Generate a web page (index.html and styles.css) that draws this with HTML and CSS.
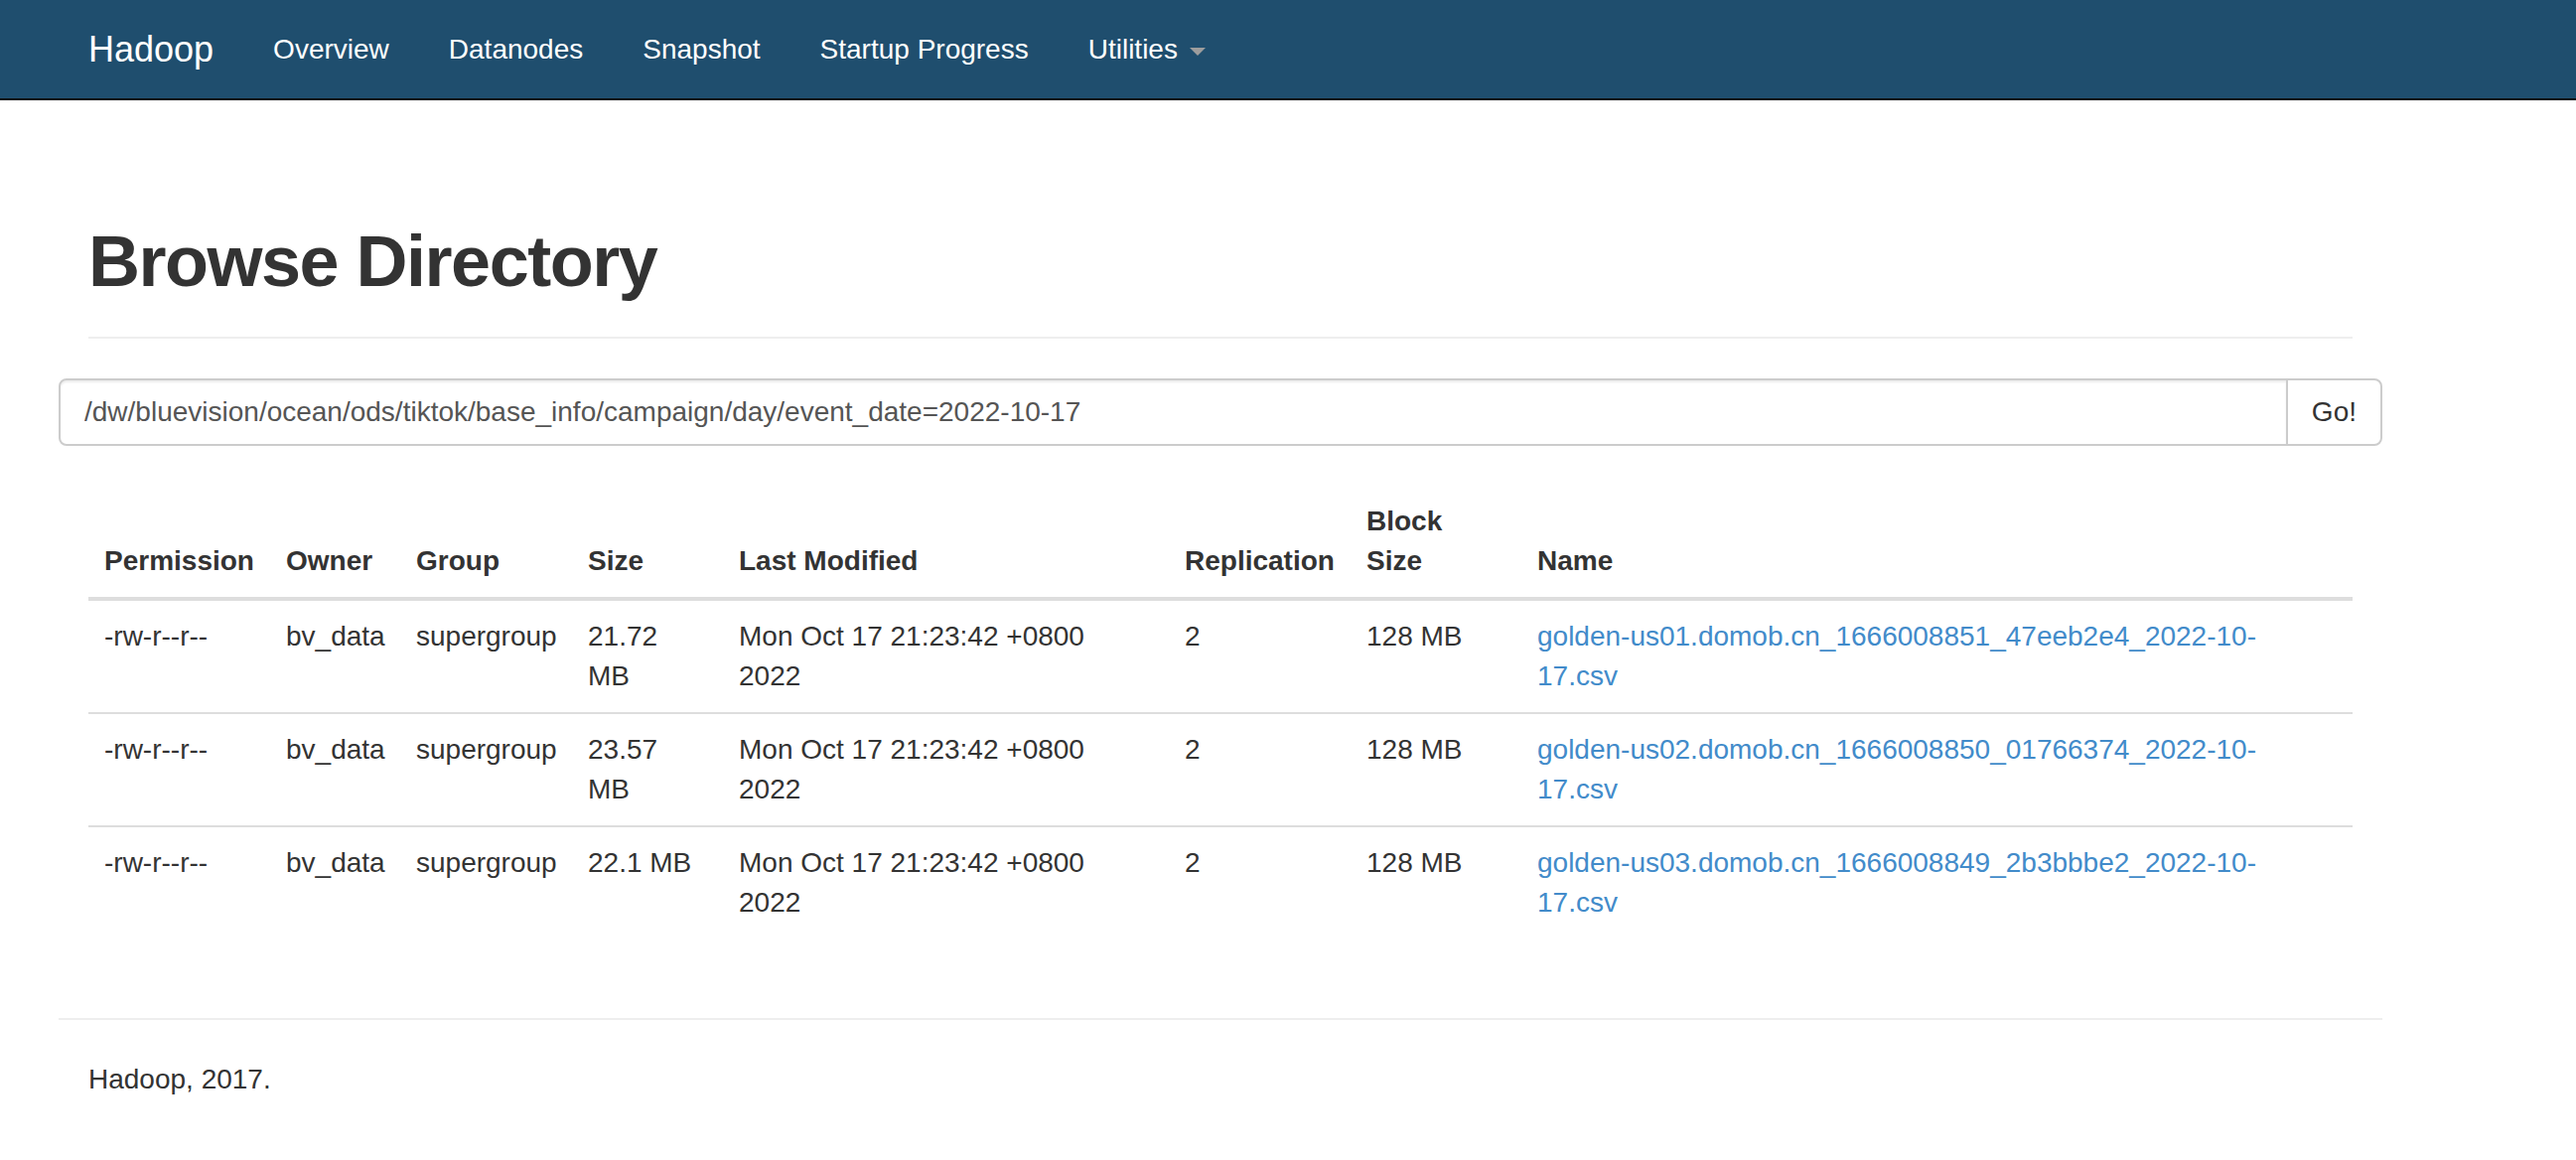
FILE: index.html
```html
<!DOCTYPE html>
<html>
<head>
<meta charset="utf-8">
<title>Browsing HDFS</title>
<link rel="stylesheet" href="styles.css">
</head>
<body>
<header class="navbar">
  <div class="nav-container">
    <a class="brand" href="#">Hadoop</a>
    <ul class="nav">
      <li><a href="#">Overview</a></li>
      <li><a href="#">Datanodes</a></li>
      <li><a href="#">Snapshot</a></li>
      <li><a href="#">Startup Progress</a></li>
      <li><a href="#">Utilities <b class="caret"></b></a></li>
    </ul>
  </div>
</header>

<div class="container">
  <div class="page-header"><h1>Browse Directory</h1></div>

  <div class="row">
    <form class="input-group">
      <input type="text" class="form-control" value="/dw/bluevision/ocean/ods/tiktok/base_info/campaign/day/event_date=2022-10-17">
      <button class="btn" type="button">Go!</button>
    </form>
  </div>

  <div class="panel">
    <table class="table">
      <colgroup>
        <col class="c-perm"><col class="c-owner"><col class="c-group"><col class="c-size"><col class="c-date"><col class="c-repl"><col class="c-block"><col class="c-name">
      </colgroup>
      <thead>
        <tr>
          <th>Permission</th><th>Owner</th><th>Group</th><th>Size</th><th>Last Modified</th><th>Replication</th><th>Block Size</th><th>Name</th>
        </tr>
      </thead>
      <tbody>
        <tr>
          <td>-rw-r--r--</td><td>bv_data</td><td>supergroup</td><td>21.72 MB</td><td>Mon Oct 17 21:23:42 +0800 2022</td><td>2</td><td>128 MB</td><td><a href="#">golden-us01.domob.cn_1666008851_47eeb2e4_2022-10-17.csv</a></td>
        </tr>
        <tr>
          <td>-rw-r--r--</td><td>bv_data</td><td>supergroup</td><td>23.57 MB</td><td>Mon Oct 17 21:23:42 +0800 2022</td><td>2</td><td>128 MB</td><td><a href="#">golden-us02.domob.cn_1666008850_01766374_2022-10-17.csv</a></td>
        </tr>
        <tr>
          <td>-rw-r--r--</td><td>bv_data</td><td>supergroup</td><td>22.1 MB</td><td>Mon Oct 17 21:23:42 +0800 2022</td><td>2</td><td>128 MB</td><td><a href="#">golden-us03.domob.cn_1666008849_2b3bbbe2_2022-10-17.csv</a></td>
        </tr>
      </tbody>
    </table>
  </div>

  <div class="row footer">
    <hr>
    <p class="copy">Hadoop, 2017.</p>
  </div>
</div>
</body>
</html>
```

FILE: styles.css
```css
* { box-sizing: border-box; }

html, body {
  margin: 0;
  padding: 0;
  background: #fff;
}

body {
  font-family: "Liberation Sans", Arial, Helvetica, sans-serif;
  font-size: 28px;
  line-height: 40px;
  color: #333;
}

a { color: #428bca; text-decoration: none; }

/* Navbar */
.navbar {
  background: #1f4e6e;
  border-bottom: 2px solid #080808;
  height: 101px;
}

.nav-container {
  margin-left: 59px;
  width: 2340px;
  padding: 0 30px;
  display: flex;
  align-items: flex-start;
}

.brand {
  margin-left: -30px;
  padding: 30px;
  font-size: 36px;
  line-height: 40px;
  color: #fff;
}

.nav {
  list-style: none;
  margin: 0;
  padding: 0;
  display: flex;
}

.nav a {
  display: block;
  padding: 30px;
  font-size: 28px;
  line-height: 40px;
  color: #fff;
}

.caret {
  display: inline-block;
  width: 0;
  height: 0;
  margin-left: 4px;
  vertical-align: middle;
  border-top: 8px solid #9d9d9d;
  border-left: 8px solid transparent;
  border-right: 8px solid transparent;
}

/* Main container */
.container {
  margin-left: 59px;
  width: 2340px;
  padding: 0 30px;
}

.row {
  margin: 0 -30px;
}

.page-header {
  margin: 123px 0 40px;
  padding-bottom: 17px;
  border-bottom: 2px solid #eee;
}

.page-header h1 {
  margin: 0 0 20px;
  font-size: 72px;
  line-height: 78px;
  font-weight: bold;
  letter-spacing: -1.5px;
  color: #333;
}

/* Input group */
.input-group {
  display: flex;
  margin: 0;
}

.form-control {
  flex: 1;
  height: 68px;
  padding: 12px 24px;
  font-family: inherit;
  font-size: 28px;
  line-height: 40px;
  color: #555;
  background: #fff;
  border: 2px solid #ccc;
  border-radius: 8px 0 0 8px;
  box-shadow: inset 0 2px 2px rgba(0, 0, 0, 0.075);
  outline: none;
}

.btn {
  height: 68px;
  margin-left: -2px;
  padding: 12px 24px;
  font-family: inherit;
  font-size: 28px;
  line-height: 40px;
  color: #333;
  background: #fff;
  border: 2px solid #ccc;
  border-radius: 0 8px 8px 0;
}

/* Table */
.panel {
  margin-top: 40px;
}

.table {
  width: 100%;
  table-layout: fixed;
  border-collapse: separate;
  border-spacing: 0;
  margin-bottom: 80px;
}

.c-perm { width: 183px; }
.c-owner { width: 131px; }
.c-group { width: 173px; }
.c-size { width: 152px; }
.c-date { width: 449px; }
.c-repl { width: 183px; }
.c-block { width: 172px; }
.c-name { width: 837px; }

.table th,
.table td {
  padding: 16px 8px 16px 16px;
  text-align: left;
  line-height: 40px;
}

.table th {
  font-weight: bold;
  vertical-align: bottom;
  border-bottom: 4px solid #ddd;
}

.table td {
  vertical-align: top;
  border-top: 2px solid #ddd;
}

.table tbody tr:first-child td {
  border-top: 0;
}

.table th:nth-child(4),
.table td:nth-child(4) { padding-right: 26px; }

.table th:nth-child(5),
.table td:nth-child(5) { padding-right: 40px; }

.table th:nth-child(7),
.table td:nth-child(7) { padding-right: 30px; }

.table th:nth-child(8),
.table td:nth-child(8) { padding-right: 40px; }

/* Footer */
.footer hr {
  margin: 40px 0;
  border: 0;
  border-top: 2px solid #eee;
  height: 0;
}

.copy {
  margin: 0 0 20px;
  padding: 0 30px;
}
```
